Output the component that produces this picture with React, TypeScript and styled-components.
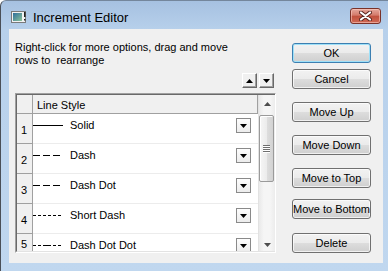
import React from 'react';
import styled, { createGlobalStyle, css } from 'styled-components';

const GlobalStyle = createGlobalStyle`
  html, body { margin: 0; padding: 0; background: #fff; }
  body {
    font-family: "Liberation Sans", Arial, sans-serif;
    font-size: 11px;
    color: #000;
  }
`;

const Window = styled.div`
  width: 388px;
  height: 271px;
  box-sizing: border-box;
  display: flex;
  flex-direction: column;
  background: linear-gradient(#a6c1e1 0px, #b7d0eb 29px, #c0d7ef 100%);
  border-left: 1px solid #4a4f57;
  border-top: 1px solid #74869c;
  border-top-left-radius: 6px;
  overflow: hidden;
`;

const TitleBar = styled.div`
  height: 28px;
  box-sizing: border-box;
  padding: 3px 7px 0 10px;
  display: flex;
  align-items: center;
  flex-shrink: 0;
`;

const TitleText = styled.span`
  margin-left: 6px;
  font-size: 13px;
  color: #000;
  flex: 1;
  padding-top: 2px;
`;

const CloseButton = styled.div`
  width: 31px;
  height: 16px;
  box-sizing: border-box;
  border: 1px solid #7a3229;
  border-radius: 3px;
  background: linear-gradient(#e4a79c 0%, #d47a6a 45%, #c0503d 50%, #d06a55 100%);
  box-shadow: inset 0 0 0 1px rgba(255, 210, 200, 0.55);
  display: flex;
  align-items: center;
  justify-content: center;
  margin-top: -2px;
`;

const Client = styled.div`
  flex: 1;
  margin: 0 5px 8px 8px;
  background: #f0f0f0;
  display: flex;
  padding: 12px 12px 0 6px;
`;

const LeftPane = styled.div`
  width: 261px;
  display: flex;
  flex-direction: column;
`;

const Hint = styled.div`
  line-height: 13px;
  white-space: pre;
`;

const ArrowRow = styled.div`
  display: flex;
  justify-content: flex-end;
  gap: 2px;
  margin-top: 6px;
  padding-right: 2px;
`;

const SmallButton = styled.div`
  width: 15px;
  height: 15px;
  box-sizing: border-box;
  background: #f0f0f0;
  border: 1px solid;
  border-color: #fff #696969 #696969 #fff;
  box-shadow: inset -1px -1px 0 #a0a0a0;
  display: flex;
  align-items: center;
  justify-content: center;
`;

const GridFrame = styled.div`
  margin-top: 5px;
  height: 160px;
  box-sizing: border-box;
  border: 1px solid;
  border-color: #a0a0a0 #ffffff #ffffff #a0a0a0;
`;

const GridInner = styled.div`
  height: 100%;
  box-sizing: border-box;
  border-top: 1px solid #696969;
  border-left: 1px solid #696969;
  border-bottom: 1px solid #e3e3e3;
  display: flex;
  overflow: hidden;
  background: #fff;
`;

const Table = styled.div`
  flex: 1;
  display: flex;
  flex-direction: column;
  overflow: hidden;
`;

const Row = styled.div<{ $header?: boolean }>`
  display: flex;
  flex-shrink: 0;
  height: ${({ $header }) => ($header ? '19px' : '30px')};
`;

const RowHead = styled.div<{ $pad?: number }>`
  width: 16px;
  box-sizing: border-box;
  background: #f0f0f0;
  border-right: 1px solid #a0a0a0;
  border-bottom: 1px solid #a0a0a0;
  display: flex;
  align-items: flex-start;
  justify-content: flex-end;
  padding: ${({ $pad = 10 }) => $pad}px 5px 0 0;
  line-height: 13px;
`;

const Cell = styled.div<{ $header?: boolean }>`
  flex: 1;
  box-sizing: border-box;
  display: flex;
  ${({ $header }) =>
    $header
      ? css`
          background: #f0f0f0;
          border-bottom: 1px solid #a0a0a0;
          border-right: 1px solid #a0a0a0;
          align-items: center;
          padding: 1px 0 0 4px;
        `
      : css`
          background: #fff;
          border-bottom: 1px solid #ececec;
          align-items: flex-start;
          padding: 4px 7px 0 0;
        `}
`;

const LineSample = styled.div`
  width: 30px;
  height: 17px;
  display: flex;
  align-items: center;
  margin-top: -1px;
`;

const CellText = styled.span`
  margin-left: 7px;
  line-height: 15px;
  flex: 1;
`;

const DropButton = styled.div`
  width: 15px;
  height: 15px;
  box-sizing: border-box;
  border: 1px solid #8a8a8a;
  background: linear-gradient(#fdfdfd, #ececec);
  display: flex;
  align-items: center;
  justify-content: center;
  padding-top: 1px;
`;

const ScrollBar = styled.div`
  width: 17px;
  flex-shrink: 0;
  display: flex;
  flex-direction: column;
  background: linear-gradient(to right, #e9e9e9, #f5f5f5 30%, #f5f5f5 70%, #ececec);
  border-left: 1px solid #e2e2e2;
  box-sizing: border-box;
`;

const ScrollArrow = styled.div<{ $down?: boolean }>`
  height: 17px;
  display: flex;
  justify-content: center;
  align-items: ${({ $down }) => ($down ? 'flex-end' : 'center')};
  padding-bottom: ${({ $down }) => ($down ? '4px' : '0')};
  margin-top: ${({ $down }) => ($down ? 'auto' : '0')};
  box-sizing: border-box;
`;

const Thumb = styled.div`
  margin: 3px 1px 0 0;
  height: 67px;
  box-sizing: border-box;
  border: 1px solid #9a9a9a;
  border-radius: 2px;
  background: linear-gradient(to right, #f6f6f6, #ececec 50%, #dedede 51%, #d2d2d2);
  box-shadow: inset 1px 1px 0 #fff;
  display: flex;
  flex-direction: column;
  align-items: center;
  justify-content: center;
  gap: 1px;
`;

const Grip = styled.div`
  width: 7px;
  height: 1px;
  background: #6f6f6f;
  box-shadow: 0 1px 0 #fff;
`;

const RightPane = styled.div`
  width: 79px;
  margin-left: 16px;
  padding-top: 2px;
  display: flex;
  flex-direction: column;
`;

const PushButton = styled.div<{ $default?: boolean; $mt: number }>`
  height: 20px;
  margin-top: ${({ $mt }) => $mt}px;
  box-sizing: border-box;
  border: 1px solid ${({ $default }) => ($default ? '#3c7fb1' : '#707070')};
  border-radius: 3px;
  background: linear-gradient(#f2f2f2 0%, #ebebeb 50%, #dddddd 51%, #cfcfcf 100%);
  box-shadow: inset 0 0 0 1px ${({ $default }) => ($default ? '#9ee0f8' : 'rgba(255,255,255,0.7)')};
  display: flex;
  align-items: center;
  justify-content: center;
  white-space: nowrap;
  font-size: 11px;
`;

const Tri = ({ up, color = '#000' }: { up?: boolean; color?: string }) => (
  <svg width="7" height="4" viewBox="0 0 7 4">
    <path d={up ? 'M3.5 0 L7 4 L0 4 Z' : 'M0 0 L7 0 L3.5 4 Z'} fill={color} />
  </svg>
);

const TitleIcon = () => (
  <svg width="16" height="12" viewBox="0 0 16 12">
    <defs>
      <linearGradient id="ig" x1="0" y1="0" x2="1" y2="1">
        <stop offset="0" stopColor="#2f6f9c" />
        <stop offset="1" stopColor="#8cc49a" />
      </linearGradient>
    </defs>
    <rect x="0.5" y="0.5" width="14" height="11" fill="#f2f2f2" stroke="#7a7a7a" />
    <rect x="2" y="2" width="9" height="8" fill="url(#ig)" />
    <rect x="13" y="1" width="1.5" height="5" fill="#222" />
    <rect x="13" y="8" width="1.5" height="1.5" fill="#222" />
  </svg>
);

const CloseGlyph = () => (
  <svg width="13" height="10" viewBox="0 0 13 10">
    <path d="M2 1.5 L11 8.5 M11 1.5 L2 8.5" stroke="#5a2620" strokeWidth="4" strokeLinecap="round" />
    <path d="M2 1.5 L11 8.5 M11 1.5 L2 8.5" stroke="#ffffff" strokeWidth="2.2" strokeLinecap="round" />
  </svg>
);

const LineDraw = ({ dash }: { dash?: string }) => (
  <svg width="30" height="1" viewBox="0 0 30 1">
    <line x1="0" y1="0.5" x2="30" y2="0.5" stroke="#000" strokeWidth="1" strokeDasharray={dash} />
  </svg>
);

const rows = [
  { n: 1, name: 'Solid', dash: undefined },
  { n: 2, name: 'Dash', dash: '7 3' },
  { n: 3, name: 'Dash Dot', dash: '7 3' },
  { n: 4, name: 'Short Dash', dash: '3 2' },
  { n: 5, name: 'Dash Dot Dot', dash: '3 2 3 2 8 2' },
];

const buttons = [
  { label: 'OK', mt: 0, def: true },
  { label: 'Cancel', mt: 6 },
  { label: 'Move Up', mt: 13 },
  { label: 'Move Down', mt: 13 },
  { label: 'Move to Top', mt: 13 },
  { label: 'Move to Bottom', mt: 11 },
  { label: 'Delete', mt: 14 },
];

export default function App() {
  return (
    <>
      <GlobalStyle />
      <Window>
        <TitleBar>
          <TitleIcon />
          <TitleText>Increment Editor</TitleText>
          <CloseButton>
            <CloseGlyph />
          </CloseButton>
        </TitleBar>
        <Client>
          <LeftPane>
            <Hint>{'Right-click for more options, drag and move\nrows to  rearrange'}</Hint>
            <ArrowRow>
              <SmallButton><Tri up /></SmallButton>
              <SmallButton><Tri /></SmallButton>
            </ArrowRow>
            <GridFrame>
              <GridInner>
                <Table>
                  <Row $header>
                    <RowHead />
                    <Cell $header>Line Style</Cell>
                  </Row>
                  {rows.map((r, i) => (
                    <Row key={r.n}>
                      <RowHead $pad={i === rows.length - 1 ? 4 : 10}>{r.n}</RowHead>
                      <Cell>
                        <LineSample>
                          <LineDraw dash={r.dash} />
                        </LineSample>
                        <CellText>{r.name}</CellText>
                        <DropButton><Tri /></DropButton>
                      </Cell>
                    </Row>
                  ))}
                </Table>
                <ScrollBar>
                  <ScrollArrow><Tri up color="#4d4d4d" /></ScrollArrow>
                  <Thumb>
                    <Grip />
                    <Grip />
                    <Grip />
                    <Grip />
                  </Thumb>
                  <ScrollArrow $down><Tri color="#4d4d4d" /></ScrollArrow>
                </ScrollBar>
              </GridInner>
            </GridFrame>
          </LeftPane>
          <RightPane>
            {buttons.map((b) => (
              <PushButton key={b.label} $mt={b.mt} $default={b.def}>
                {b.label}
              </PushButton>
            ))}
          </RightPane>
        </Client>
      </Window>
    </>
  );
}
